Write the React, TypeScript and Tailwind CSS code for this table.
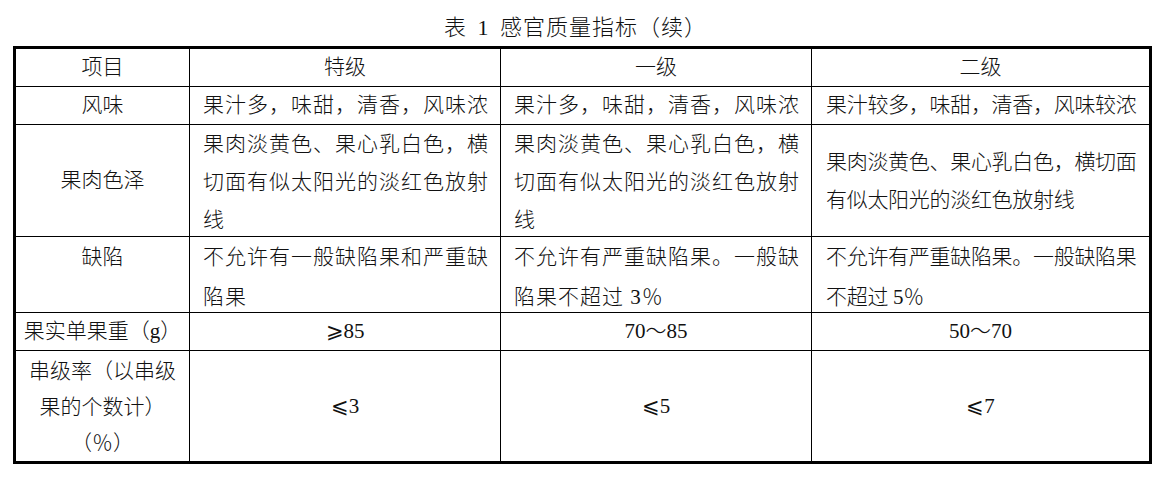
import React from "react";

const font = "font-['Liberation_Serif','Noto_Sans_CJK_SC','DejaVu_Sans',serif]";

function Cell({ className = "", children }: { className?: string; children: React.ReactNode }) {
  return (
    <div className={`flex border-r border-b border-black whitespace-nowrap ${className}`}>
      {children}
    </div>
  );
}

export default function App() {
  return (
    <div className={`w-[1164px] h-[486px] bg-white text-[#111] font-light ${font} overflow-hidden`}>
      {/* caption */}
      <div className="ml-[13px] w-[1139px] h-[46px] pt-[15px] pr-[14px] text-center text-[22px] leading-[26px] tracking-[1px] [word-spacing:4px]">
        表 1 感官质量指标（续）
      </div>

      <div className="ml-[13px] w-[1139px] border-[3px] border-black grid grid-cols-[174px_311px_311px_337px] grid-rows-[38px_38px_112px_76px_38px_110px] text-[21px]">
        {/* header */}
        <Cell className="items-center justify-center leading-[37px]">项目</Cell>
        <Cell className="items-center justify-center leading-[37px]">特级</Cell>
        <Cell className="items-center justify-center leading-[37px]">一级</Cell>
        <Cell className="items-center justify-center leading-[37px] border-r-0">二级</Cell>

        {/* 风味 */}
        <Cell className="items-center justify-center leading-[37px]">风味</Cell>
        <Cell className="items-center pl-[13px] tracking-[1px] leading-[37px]">果汁多，味甜，清香，风味浓</Cell>
        <Cell className="items-center pl-[13px] tracking-[1px] leading-[37px]">果汁多，味甜，清香，风味浓</Cell>
        <Cell className="items-center pl-[14px] tracking-[-0.3px] leading-[37px] border-r-0">果汁较多，味甜，清香，风味较浓</Cell>

        {/* 果肉色泽 */}
        <Cell className="items-center justify-center leading-[37px]">果肉色泽</Cell>
        <Cell className="items-start pl-[13px] tracking-[1px] leading-[38px]">
          <div>
            果肉淡黄色、果心乳白色，横
            <br />
            切面有似太阳光的淡红色放射
            <br />
            线
          </div>
        </Cell>
        <Cell className="items-start pl-[13px] tracking-[1px] leading-[38px]">
          <div>
            果肉淡黄色、果心乳白色，横
            <br />
            切面有似太阳光的淡红色放射
            <br />
            线
          </div>
        </Cell>
        <Cell className="items-center pl-[14px] tracking-[-0.3px] leading-[38px] border-r-0">
          <div>
            果肉淡黄色、果心乳白色，横切面
            <br />
            有似太阳光的淡红色放射线
          </div>
        </Cell>

        {/* 缺陷 */}
        <Cell className="items-start justify-center leading-[40px]">缺陷</Cell>
        <Cell className="items-start pl-[13px] tracking-[1px] leading-[40px]">
          <div>
            不允许有一般缺陷果和严重缺
            <br />
            陷果
          </div>
        </Cell>
        <Cell className="items-start pl-[13px] tracking-[1px] leading-[40px]">
          <div>
            不允许有严重缺陷果。一般缺
            <br />
            陷果不超过 3％
          </div>
        </Cell>
        <Cell className="items-start pl-[14px] tracking-[-0.3px] leading-[40px] border-r-0">
          <div>
            不允许有严重缺陷果。一般缺陷果
            <br />
            不超过 5％
          </div>
        </Cell>

        {/* 果实单果重 */}
        <Cell className="items-center justify-center leading-[37px]">果实单果重（g）</Cell>
        <Cell className="items-center justify-center leading-[37px]">⩾85</Cell>
        <Cell className="items-center justify-center leading-[37px]">70～85</Cell>
        <Cell className="items-center justify-center leading-[37px] border-r-0">50～70</Cell>

        {/* 串级率 */}
        <Cell className="items-center justify-center text-center leading-[36px] pt-[2px] border-b-0">
          <div>
            串级率（以串级
            <br />
            果的个数计）
            <br />
            （％）
          </div>
        </Cell>
        <Cell className="items-center justify-center leading-[37px] border-b-0">⩽3</Cell>
        <Cell className="items-center justify-center leading-[37px] border-b-0">⩽5</Cell>
        <Cell className="items-center justify-center leading-[37px] border-r-0 border-b-0">⩽7</Cell>
      </div>
    </div>
  );
}
